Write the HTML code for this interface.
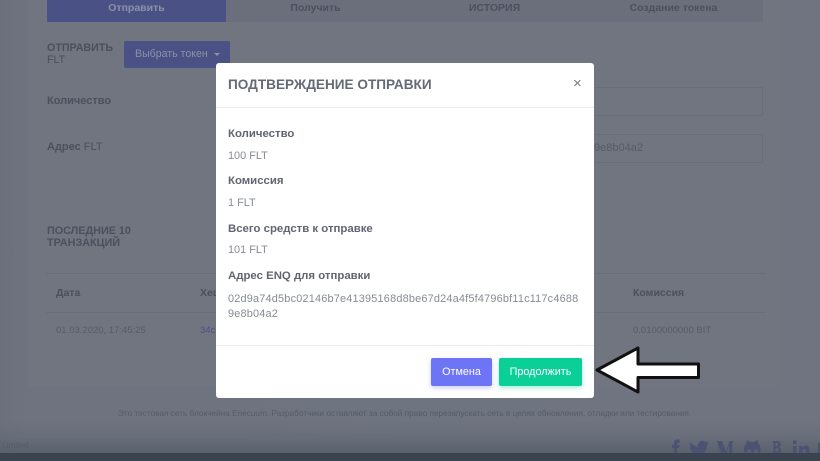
<!DOCTYPE html>
<html lang="ru">
<head>
<meta charset="utf-8">
<title>Подтверждение отправки</title>
<style>
html,body{margin:0;padding:0;width:820px;height:461px;overflow:hidden}
body{position:relative;background:#6f7480;font-family:"Liberation Sans","Noto Sans CJK SC",sans-serif;}
.a{position:absolute;white-space:nowrap;line-height:1}
.b{font-weight:700}
.dim{color:#4a505d}
.dim2{color:#565c68}
#modal{position:absolute;left:216px;top:63px;width:378px;height:335px;background:#fff;border-radius:3px;color:#6c757d}
#modal .l{position:absolute;left:12px;font-size:11.4px;font-weight:700;color:#5f6671;white-space:nowrap;line-height:14px}
#modal .v{position:absolute;left:12px;font-size:10.9px;color:#868c94;white-space:nowrap;line-height:14px}
.btn{position:absolute;top:295px;height:28px;border-radius:2px;color:#fff;font-size:10.8px;line-height:28px;text-align:center}
</style>
</head>
<body>
<div class="a" style="left:0;top:0;width:820px;height:461px;background:linear-gradient(90deg,#6b707c 0,#6e737f 28px,#6f7480 100%)"></div>
<div class="a" style="left:28px;top:0;width:753px;height:386px;background:#70757f"></div>
<div class="a" style="left:0;top:420px;width:820px;height:33px;background:linear-gradient(180deg,rgba(94,100,112,0) 0,rgba(94,100,112,.35) 50%,rgba(90,96,108,1) 100%)"></div>
<div class="a" style="left:0;top:453px;width:820px;height:8px;background:#3a4350"></div>

<div class="a" style="left:47px;top:0;width:716px;height:22px;background:#6a6f7b"></div>
<div class="a" style="left:47px;top:0;width:179px;height:22px;background:#4a5185;border-radius:0 0 1px 1px"></div>
<div class="a b" style="left:47px;top:3px;width:179px;text-align:center;font-size:10.5px;color:#8c91a8">Отправить</div>
<div class="a b dim" style="left:226px;top:3px;width:179px;text-align:center;font-size:10.5px">Получить</div>
<div class="a b dim" style="left:405px;top:3px;width:179px;text-align:center;font-size:10.5px">ИСТОРИЯ</div>
<div class="a b dim" style="left:584px;top:3px;width:179px;text-align:center;font-size:10.5px">Создание токена</div>

<div class="a b dim" style="left:47px;top:43px;font-size:10.7px">ОТПРАВИТЬ</div>
<div class="a dim" style="left:47px;top:55px;font-size:10.7px">FLT</div>
<div class="a" style="left:124px;top:41px;width:106px;height:27px;background:#4a5185;border-radius:2px"></div>
<div class="a" style="left:135px;top:49px;font-size:10.6px;color:#8c91a8">Выбрать токен</div>
<div class="a" style="left:214px;top:53px;width:0;height:0;border:3px solid transparent;border-top-color:#8c91a8;border-bottom:0"></div>

<div class="a b dim" style="left:47px;top:96px;font-size:11px">Количество</div>
<div class="a" style="left:47px;top:142px;font-size:11px;color:#4a505d"><b>Адрес</b> FLT</div>
<div class="a" style="left:590px;top:87px;width:172px;height:27px;border:1px solid #696e7a;border-left:0;border-radius:0 2px 2px 0"></div>
<div class="a" style="left:590px;top:134px;width:172px;height:27px;border:1px solid #696e7a;border-left:0;border-radius:0 2px 2px 0"></div>
<div class="a dim2" style="left:594px;top:143px;font-size:11px">9e8b04a2</div>

<div class="a b dim" style="left:47px;top:226px;font-size:10.8px">ПОСЛЕДНИЕ 10</div>
<div class="a b dim" style="left:47px;top:238px;font-size:10.8px">ТРАНЗАКЦИЙ</div>

<div class="a" style="left:46px;top:273px;width:170px;height:1px;background:#696e7a"></div>
<div class="a" style="left:594px;top:273px;width:172px;height:1px;background:#696e7a"></div>
<div class="a" style="left:46px;top:312px;width:170px;height:1px;background:#696e7a"></div>
<div class="a" style="left:594px;top:312px;width:172px;height:1px;background:#696e7a"></div>
<div class="a b dim" style="left:56px;top:288px;font-size:10.5px">Дата</div>
<div class="a b dim" style="left:200px;top:288px;font-size:10.5px">Хеш</div>
<div class="a b dim" style="left:633px;top:288px;font-size:10.5px">Комиссия</div>
<div class="a dim2" style="left:56px;top:326px;font-size:9.5px">01.03.2020, 17:45:25</div>
<div class="a" style="left:200px;top:326px;font-size:9.5px;color:#4a5185">34c</div>
<div class="a dim2" style="left:633px;top:326px;font-size:9.5px">0.0100000000 BIT</div>

<div class="a dim2" style="left:118px;top:410px;font-size:8.25px">Это тестовая сеть блокчейна Enecuum. Разработчики оставляют за собой право перезапускать сеть в целях обновления, отладки или тестирования.</div>
<div class="a dim2" style="left:2px;top:441px;font-size:8.3px">Limited</div>

<div style="position:absolute;left:0;top:0;width:820px;height:453px;overflow:hidden">
<svg class="a" style="left:660px;top:431px" width="160" height="30" viewBox="0 0 160 30" fill="#4c5272">
<path d="M14 26V17H12v-3h2v-2c0-2.500 1.500-3.500 3.500-3.500H19.500V12H18c-.8 0-1 .4-1 1.200V14h2.500l-.4 3H17v9z"/>
<path d="M30 11c2 3 5 4.500 8 4.700-.5-3 1.500-6 4.500-6 1.500 0 2.500.7 3 1.400l2.500-.9-1 2.500 2-.6-2 2.300c0 6-4.500 12-11.500 12-2.500 0-4.500-.7-6-1.800 2 0 3.500-.4 5-1.600-1.700 0-3-1.100-3.600-2.700h1.800c-1.800-.6-3.100-2.300-3.100-4.300l1.700.5c-1.600-1.400-1.800-4-.8-5.500z"/>
<path d="M57.500 10h4.500l4 10.500 3.500-10.500h4v1l-1.200 1v13l1.200 1v1h-6v-1l1.500-1V14l-4.500 13h-1L58.500 15v10l1.500 1v1h-3v-1l1.200-1V12l-1.200-1z"/>
<path d="M87 9l3 2h4.500l3-2 1 4c1.200 1.300 2 3 2 4.500 0 5.500-3.500 8.500-8.500 8.500s-8-3-8-8.500c0-1.500.8-3.200 2-4.500zm2 9.500a2 2.500 0 1 0 0 5 2 2.500 0 1 0 0-5zm7 0a2 2.500 0 1 0 0 5 2 2.500 0 1 0 0-5z" fill-rule="evenodd"/>
<path d="M112.500 10h4.500c2.500 0 3.700 1.300 3.700 3.200 0 1.300-.7 2.200-1.700 2.800 1.300.5 2.100 1.800 2.100 3.200 0 2.300-1.700 3.800-4.300 3.800h-4.300v-1.500h1V11.500h-1zm3 1.700v3.400h1c1 0 1.600-.8 1.600-1.700s-.6-1.700-1.600-1.700zm0 5v4h1.400c1 0 1.800-.9 1.800-2s-.8-2-1.800-2z" fill-rule="evenodd"/>
<path d="M133 15h3.500v12H133zM133 9.500h3.500v3.500H133zM139 15h3.500v2c1-1.500 2-2.500 3.500-2.500 2.500 0 3.500 2 3.500 5V27h-3.500v-6c0-2-.7-3-2-3s-1.500 1-1.500 3v6H139z"/>
<rect x="158" y="12" width="2" height="15"/>
</svg>
</div>

<div id="modal">
  <div class="a" style="left:12px;top:14px;font-size:13.6px;font-weight:700;color:#646b75;line-height:16px">ПОДТВЕРЖДЕНИЕ ОТПРАВКИ</div>
  <div class="a" style="left:357px;top:14px;font-size:15px;color:#767c84;line-height:14px">×</div>
  <div class="a" style="left:0;top:44px;width:378px;height:1px;background:#e9ecef"></div>
  <div class="l" style="top:64px">Количество</div>
  <div class="v" style="top:86px">100 FLT</div>
  <div class="l" style="top:111px">Комиссия</div>
  <div class="v" style="top:133px">1 FLT</div>
  <div class="l" style="top:159px">Всего средств к отправке</div>
  <div class="v" style="top:180px">101 FLT</div>
  <div class="l" style="top:206px">Адрес ENQ для отправки</div>
  <div class="v" style="top:229px;letter-spacing:.2px">02d9a74d5bc02146b7e41395168d8be67d24a4f5f4796bf11c117c4688</div>
  <div class="v" style="top:244px;letter-spacing:.2px">9e8b04a2</div>
  <div class="a" style="left:0;top:282px;width:378px;height:1px;background:#e9ecef"></div>
  <div class="btn" style="left:215px;width:61px;background:#6e75f5;box-shadow:0 2px 5px rgba(110,117,245,.35)">Отмена</div>
  <div class="btn" style="left:283px;width:83px;background:#0ad098;box-shadow:0 2px 5px rgba(10,208,152,.35)">Продолжить</div>
</div>

<svg class="a" style="left:590px;top:340px" width="120" height="70" viewBox="0 0 120 70">
<path d="M7 30 L48 8 L48 24 L108.500 24 L108.500 37.500 L48 37.500 L48 52 Z" fill="#fff" stroke="#111" stroke-width="3" stroke-linejoin="round"/>
</svg>
</body>
</html>
